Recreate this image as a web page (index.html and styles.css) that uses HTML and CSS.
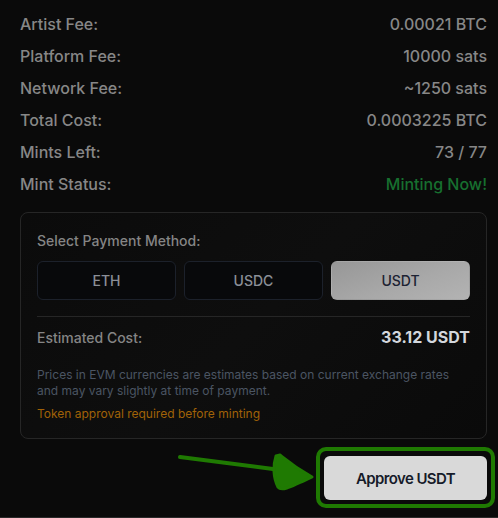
FILE: index.html
```html
<!DOCTYPE html>
<html lang="en">
<head>
<meta charset="utf-8">
<link rel="stylesheet" href="styles.css">
</head>
<body>
<main class="panel">
  <section class="details">
    <div class="row"><span>Artist Fee:</span><span>0.00021 BTC</span></div>
    <div class="row"><span>Platform Fee:</span><span>10000 sats</span></div>
    <div class="row"><span>Network Fee:</span><span>~1250 sats</span></div>
    <div class="row"><span>Total Cost:</span><span>0.0003225 BTC</span></div>
    <div class="row"><span>Mints Left:</span><span>73 / 77</span></div>
    <div class="row"><span>Mint Status:</span><span class="status">Minting Now!</span></div>
  </section>

  <section class="card">
    <div class="card-label">Select Payment Method:</div>
    <div class="methods">
      <button class="method">ETH</button>
      <button class="method">USDC</button>
      <button class="method active">USDT</button>
    </div>
    <div class="estimate">
      <span class="est-label">Estimated Cost:</span>
      <span class="est-value">33.12 USDT</span>
    </div>
    <p class="note">Prices in EVM currencies are estimates based on current exchange rates and may vary slightly at time of payment.</p>
    <p class="warn">Token approval required before minting</p>
  </section>

  <div class="actions">
    <svg class="arrow" width="150" height="50" viewBox="0 0 150 50">
      <path d="M3 6 L96 18" stroke="#1f7a02" stroke-width="4" stroke-linecap="round" fill="none"/>
      <path d="M99 5 C 96 14, 96 26, 101 36 C 104 40, 110 38, 135 26 C 117 16, 108 8, 103 4 Z" fill="#1f7a02" stroke="#1f7a02" stroke-width="3" stroke-linejoin="round"/>
    </svg>
    <button class="approve">Approve USDT</button>
  </div>
</main>
</body>
</html>
```

FILE: styles.css
```css
* { box-sizing: border-box; }
html, body { margin: 0; padding: 0; }
body {
  background: #0a0a0a;
  font-family: Inter, "Noto Sans", Arial, sans-serif;
  width: 498px;
  height: 518px;
  overflow: hidden;
}
.panel {
  height: 518px;
  padding: 12px 11px 0 20px;
  border-bottom: 1px solid #2a2a2a;
}
.details {
  display: flex;
  flex-direction: column;
  gap: 8px;
}
.row {
  display: flex;
  justify-content: space-between;
  font-size: 16px;
  line-height: 24px;
  font-weight: 500;
  color: #878787;
}
.status { color: #17702f; }

.card {
  margin-top: 16px;
  border: 1px solid #262626;
  border-radius: 8px;
  padding: 16px 16px 16px;
  background: linear-gradient(135deg, #0b0b0b 0%, #0e0e0e 50%, #0a0a0a 100%);
}
.card-label {
  font-size: 14px;
  line-height: 24px;
  font-weight: 500;
  color: #858585;
}
.methods {
  margin-top: 8px;
  display: grid;
  grid-template-columns: repeat(3, 1fr);
  gap: 8px;
  padding-bottom: 16px;
  border-bottom: 1px solid #262626;
}
.method {
  height: 39px;
  border: 1px solid #1c212b;
  border-radius: 6px;
  background: #08090b;
  color: #8b8f97;
  font-family: inherit;
  font-size: 14px;
  font-weight: 500;
  padding: 0;
}
.method.active {
  border-color: transparent;
  background: linear-gradient(160deg, #979797 0%, #a8a8a8 55%, #b3b3b3 100%);
  color: #1c2232;
}
.estimate {
  display: flex;
  justify-content: space-between;
  align-items: center;
  height: 24px;
  margin-top: 8px;
}
.est-label {
  font-size: 14px;
  font-weight: 500;
  color: #858585;
}
.est-value {
  font-size: 16px;
  font-weight: 700;
  color: #d3d7dd;
}
.note {
  margin: 18px 0 0;
  font-size: 12px;
  line-height: 16px;
  color: #4b5563;
}
.warn {
  margin: 7px 0 0;
  font-size: 12px;
  line-height: 16px;
  color: #a16207;
}

.actions {
  position: relative;
  display: flex;
  justify-content: flex-end;
  margin-top: 17px;
}
.approve {
  position: relative;
  width: 163px;
  height: 44px;
  border: none;
  border-radius: 6px;
  background: #d9d9d9;
  color: #161b29;
  font-family: inherit;
  font-size: 15px;
  font-weight: 600;
  letter-spacing: -0.6px;
  padding: 0;
}
.approve::before {
  content: "";
  position: absolute;
  left: -8px;
  right: -8px;
  top: -9px;
  bottom: -8px;
  border: 4px solid #1f7a02;
  border-radius: 10px;
}
.arrow {
  position: absolute;
  left: 157px;
  top: -5px;
}
```
